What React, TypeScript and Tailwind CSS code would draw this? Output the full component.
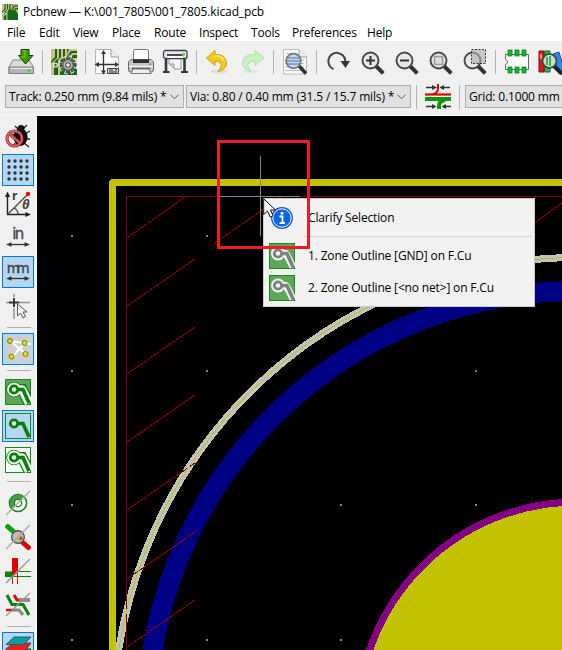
import type { ReactNode } from "react";

const DARK = "#3c3c3c";

function Icon({ children, size = 26 }: { children: ReactNode; size?: number }) {
  return (
    <svg width={size} height={size} viewBox="0 0 26 26" fill="none" className="block shrink-0">
      {children}
    </svg>
  );
}

function Board() {
  return (
    <g>
      <path d="M0 0H26V26H0Z" fill="#0d6b17" />
      <path d="M0 0H4V8L0 12ZM6 0H8V9L3 13V26H0V14L6 9ZM10 0H12V8L9 12V26H7V11L10 8ZM14 0H16V9H14ZM18 0H26V2H20L16 7V5ZM26 4V6H22L17 11V9L21 4ZM26 9V16L21 9Z" fill="#d8b987" />
      <circle cx="4.500" cy="16" r="2.600" fill="#d8ead8" />
      <circle cx="4.500" cy="16" r="1.200" fill="#0d6b17" />
    </g>
  );
}

function BoardSetup() {
  return (
    <Icon>
      <Board />
      <circle cx="17" cy="16" r="7.300" stroke="#e9e9e9" strokeWidth="4.500" strokeDasharray="3.300 2.430" />
      <circle cx="17" cy="16" r="7" stroke="#555" strokeWidth="3" strokeDasharray="2.400 3.100" />
      <circle cx="17" cy="16" r="5.300" fill="#b5b5b5" stroke="#555" strokeWidth="1.200" />
      <circle cx="17" cy="16" r="2.300" fill="#eee" stroke="#555" strokeWidth="1.100" />
    </Icon>
  );
}

function Save() {
  return (
    <Icon>
      <path d="M5 11H21L25.500 18V24.500H1V18Z" fill="#dcdcdc" stroke="#888" />
      <path d="M1 18H25.500V24.500H1Z" fill="#b4b4b4" stroke="#808080" />
      <path d="M2.500 19.500H24" stroke="#eee" />
      <rect x="19.500" y="20.500" width="3" height="2" fill="#2bd52b" />
      <path d="M13 0.500H21V6.500H25L17.500 15L10.500 6.500H13Z" fill="#3f9a08" stroke="#173c05" />
      <path d="M14 1.500H17V8H13" stroke="#74cc2c" />
    </Icon>
  );
}

function PageSettings() {
  return (
    <Icon>
      <path d="M1.500 0.500H17L24.500 8V24.500H1.500Z" fill="#fcfcfc" stroke="#b5b5b5" />
      <path d="M17 0.500V8H24.500" fill="#eee" stroke="#a0a0a0" />
      <path d="M9.500 3V24M3 15.500H23" stroke="#333" strokeWidth="1.300" />
      <path d="M9.500 1L7 5H12ZM9.500 25.500L7 21.500H12ZM0.500 15.500L5 13V18ZM25 15.500L21 13V18Z" fill="#333" />
      <path d="M13.500 19.500H24.500V24.500H13.500Z" fill="#e8d8ca" stroke="#444" />
      <path d="M15 21H19M21 21H23M15 23H23" stroke="#333" />
    </Icon>
  );
}

function Print() {
  return (
    <Icon>
      <path d="M5.500 11V1.500Q5.500 0.500 7 0.500H19Q20.500 0.500 20.500 2V11Z" fill="#fff" stroke="#777" />
      <path d="M3 10.500H23L25.500 13V21Q25.500 23 23.500 23H2.500Q0.500 23 0.500 21V13Z" fill="#c4c4c4" stroke="#666" />
      <path d="M5 10.500H21V14H5Z" fill="#2f2f2f" />
      <path d="M1 17.500H25" stroke="#f1f1f1" strokeWidth="1.500" />
      <path d="M4 19.500H22" stroke="#555" strokeWidth="1.600" />
      <path d="M5 20H21L23 24.500H3Z" fill="#efefef" stroke="#777" />
      <rect x="21" y="14.500" width="2.500" height="1.500" fill="#35c535" />
    </Icon>
  );
}

function Plot() {
  return (
    <Icon>
      <path d="M4 9V22M22.500 9V22" stroke="#303840" strokeWidth="2.600" />
      <path d="M1 23H7.500M19 23H26" stroke="#303840" strokeWidth="2.200" />
      <path d="M7 7H19V20H12L7 15Z" fill="#f3f3f3" stroke="#999" />
      <path d="M7 15H12V20" fill="#d0d0d0" stroke="#999" />
      <rect x="1.500" y="1.500" width="23.500" height="8" rx="2" fill="#e8e8e8" stroke="#3b4248" strokeWidth="1.300" />
      <path d="M5 6H21" stroke="#454b50" strokeWidth="2" />
      <path d="M5 9L7 7H19L21 9" fill="#fff" />
      <rect x="20" y="4" width="3" height="2.500" fill="#6acb3e" />
    </Icon>
  );
}

function Undo() {
  return (
    <Icon>
      <ellipse cx="14" cy="22.500" rx="9" ry="2" fill="#dedede" />
      <path d="M1.500 9L10 1.500V5.500Q21 5 21.500 14Q21.500 21 13 22.500Q18 17 15 13.500Q13.500 12 10 12V16.500Z" fill="#f4cb20" stroke="#d3a000" />
      <path d="M10 7Q17 6 19 12" stroke="#ffea88" strokeWidth="1.300" />
    </Icon>
  );
}

function Redo() {
  return (
    <Icon>
      <ellipse cx="12" cy="22.500" rx="9" ry="2" fill="#e7e7e7" />
      <path d="M25 9L16 1.500V5.500Q4 5 3.500 14Q3.500 20 12 22.500Q7 17 10 13.500Q12 12 16 12V16.500Z" fill="#c9f0c5" stroke="#a5e4a2" />
    </Icon>
  );
}

function Lens({ children, fill = "#e8e8e8" }: { children?: ReactNode; fill?: string }) {
  return (
    <g>
      <path d="M16.500 16.500L24.300 24.300" stroke="#333" strokeWidth="4" />
      <circle cx="11.500" cy="11.500" r="8" fill={fill} stroke="#474747" strokeWidth="1.900" />
      {children}
    </g>
  );
}

function Find() {
  return (
    <Icon>
      <path d="M1.500 0.500H17L24.500 8V25H1.500Z" fill="#fafafa" stroke="#bcbcbc" />
      <path d="M17 0.500V8H24.500" fill="#eee" stroke="#999" />
      <path d="M4 4.500H14M4 7.500H15M3 11H22M3 14.500H22M3 18H22M3 21.500H20" stroke="#bbb" />
      <path d="M17 17L24 24.500" stroke="#333" strokeWidth="3.500" />
      <circle cx="11.500" cy="12" r="7.300" fill="#c8d7ef" stroke="#777" strokeWidth="1.800" />
      <path d="M6 9H17M5 12H18M6 15H17" stroke="#7493c9" strokeWidth="1.300" />
    </Icon>
  );
}

function Refresh() {
  return (
    <Icon>
      <path d="M8.500 20.200A8.500 8.500 0 1 1 20.300 12" stroke="#444" strokeWidth="2" />
      <path d="M15.500 12H25L20.500 19Z" fill="#333" />
    </Icon>
  );
}

function Footprint() {
  return (
    <Icon>
      <path d="M1.500 5.500H24.500V20.500H1.500V16L4 13L1.500 10Z" fill="#fafafa" stroke="#666" />
      <g fill="#11b92c" stroke="#087515" strokeWidth=".7">
        {[4, 11, 18].map((x) => (
          <g key={x}>
            <rect x={x} y="1" width="4" height="6" />
            <rect x={x} y="18" width="4" height="6" />
          </g>
        ))}
      </g>
    </Icon>
  );
}

function Library() {
  return (
    <Icon>
      <path d="M1 2H6V23H1Z" fill="#d71919" stroke="#801111" />
      <path d="M6.500 2H12V23H6.500Z" fill="#2cb34d" stroke="#08712b" />
      <path d="M15 5L21 3L27 23H20Z" fill="#3385e8" stroke="#1456a4" />
      <path d="M16 17L24 25" stroke="#222" strokeWidth="4" />
      <circle cx="11.500" cy="12" r="7" fill="#bce5c6" stroke="#444" strokeWidth="1.700" />
      <path d="M9 8V16M12 7V17" stroke="#45a864" strokeWidth="2" />
      <path d="M3 5V10" stroke="#fff" />
    </Icon>
  );
}

function TrackWidth() {
  return (
    <Icon>
      <path d="M0 10.500H26" stroke="#df0000" strokeWidth="2.200" />
      <path d="M13 0V4Q13 9 8 10" stroke="#df0000" strokeWidth="2" />
      <path d="M0 15H26" stroke="#079907" strokeWidth="4" />
      <path d="M14 25V22Q14 17 20 16" stroke="#079907" strokeWidth="4" />
      <path d="M1 3.500H9M16 3.500H25M1 22.500H10M18 22.500H26" stroke="#333" strokeWidth="1.300" />
      <path d="M12 3.500L7 1V6ZM14.500 3.500L19 1V6ZM11.500 22.500L7 20V25ZM16.500 22.500L21 20V25Z" fill="#333" />
    </Icon>
  );
}

function Bug() {
  return (
    <Icon>
      <path d="M10 3L13 6M22 2L18 6M7 11L10 12M20 11L25 8M20 16H25M19 20L24 24M10 20L8 24" stroke="#222" strokeWidth="1.300" />
      <ellipse cx="15.500" cy="14" rx="7" ry="9" fill="#060606" />
      <circle cx="16" cy="5.500" r="3.500" fill="#111" />
      <circle cx="9.500" cy="15.500" r="7.500" stroke="#a32b2e" strokeWidth="3.200" />
      <path d="M4.500 11L15 20" stroke="#a32b2e" strokeWidth="3.200" />
      <circle cx="9.500" cy="15.500" r="7.500" stroke="#df676a" strokeWidth="1.600" />
      <path d="M4.500 11L15 20" stroke="#df676a" strokeWidth="1.600" />
    </Icon>
  );
}

function GridDots() {
  return (
    <Icon>
      {[4, 10, 16, 22].flatMap((x) =>
        [4, 10, 16, 22].map((y) => <circle key={x + "-" + y} cx={x} cy={y} r="1.700" fill="#333" />),
      )}
    </Icon>
  );
}

function Polar() {
  return (
    <Icon>
      <path d="M2.500 4V23.500H23" stroke="#222" strokeWidth="1.400" />
      <path d="M2.500 0.500L0 6H5ZM26 23.500L20.500 21V26Z" fill="#222" />
      <path d="M3 23L22 4M9 17Q13 19 13 23" stroke="#4e4545" strokeWidth="1.300" />
      <circle cx="23" cy="3" r="2.200" fill="#f00" />
      <text x="7" y="9" fontSize="12" fontWeight="700" fill={DARK} fontFamily="Open Sans, sans-serif">r</text>
      <text x="17" y="18" fontSize="13" fontWeight="700" fontStyle="italic" fill="#544444" fontFamily="Open Sans, sans-serif">θ</text>
    </Icon>
  );
}

function Unit({ label }: { label: string }) {
  return (
    <Icon>
      <text x="13.200" y="14" textAnchor="middle" fontSize={label === "mm" ? 13.5 : 15} fill="#444" stroke="#444" strokeWidth=".35" fontFamily="DejaVu Sans, sans-serif" textLength={label === "mm" ? 23 : 12}>{label}</text>
      <path d="M4 19.500H22" stroke="#333" strokeWidth="1.300" />
      <path d="M1 19.500L6.500 17.300V21.700ZM25 19.500L19.500 17.300V21.700Z" fill="#333" />
    </Icon>
  );
}

function CursorShape() {
  return (
    <Icon>
      <path d="M1 9.500H5M14 9.500H25M9 1V4M9 15V26" stroke="#919191" strokeWidth="1.500" />
      <path d="M4 9.500H14M9 5V14" stroke="#333" strokeWidth="1.900" />
      <path d="M12.500 11V23L15.500 20L18 25L20.500 23.500L18 19H22Z" fill="#fafafa" stroke="#555" />
    </Icon>
  );
}

function Ratsnest() {
  return (
    <Icon>
      <rect width="26" height="26" fill="#cfcfcf" />
      <path d="M5 5L26 8M5 5L21 18M7 21L20 7" stroke="#fff" strokeWidth="2" />
      <g fill="#d4e500" stroke="#77772a">
        <circle cx="5" cy="5" r="2.500" />
        <circle cx="19.500" cy="7" r="2.500" />
        <circle cx="20.500" cy="18" r="2.500" />
        <circle cx="6.500" cy="20.500" r="2.500" />
      </g>
    </Icon>
  );
}

type ZoneKind = "filled" | "plain" | "outline" | "gray";

function Zone({ kind }: { kind: ZoneKind }) {
  const filled = kind === "filled" || kind === "gray";
  const ink = kind === "gray" ? "#808080" : "#078007";
  const path = "M9 10.500H17L24 24";
  return (
    <Icon>
      <rect x=".5" y=".5" width="25" height="25" fill={filled ? "#5ca75c" : kind === "outline" ? "#fbfbfb" : "#b5d7f4"} stroke="#178b17" />
      {kind !== "plain" && (
        <g>
          {kind !== "gray" && <path d={path} stroke="#078007" strokeWidth="11" />}
          {kind !== "gray" && <circle cx="9" cy="10.500" r="7.800" fill="#078007" />}
          <path d={path} stroke="#f5f5f5" strokeWidth={kind === "gray" ? 7 : 8.5} strokeLinejoin="round" />
          <circle cx="9" cy="10.500" r="6.900" fill="#f5f5f5" />
        </g>
      )}
      <path d="M13 10.500H18L24 24" stroke={ink} strokeWidth="3.600" />
      <circle cx="9" cy="10.500" r="3.700" fill="#e9f3e9" stroke={ink} strokeWidth="2.800" />
    </Icon>
  );
}

function PadSketch() {
  return (
    <Icon>
      <circle cx="13" cy="13" r="8.600" fill="#fafafa" stroke="#168416" strokeWidth="1.500" />
      <path d="M7 19A8.500 8.500 0 0 1 19 7Z" fill="#459c45" />
      <circle cx="13" cy="13" r="3.600" fill="#f4f4f4" stroke="#168416" strokeWidth="1.300" />
      <path d="M1 25L25 1" stroke="#aaa" strokeWidth="1.300" />
    </Icon>
  );
}

function ViaSketch() {
  return (
    <Icon>
      <path d="M1 1L10 9" stroke="#00a20a" strokeWidth="5" />
      <path d="M15 16L25 25" stroke="#dc0505" strokeWidth="5" />
      <circle cx="13" cy="13" r="6.300" fill="#bcbcbc" stroke="#555" strokeWidth="1.400" />
      <path d="M11 16L16 11V16Z" fill="#c4bf00" />
      <path d="M14 16L16 12L18 15Z" fill="#df2525" />
      <path d="M1 25L25 1" stroke="#aaa" strokeWidth="1.200" />
    </Icon>
  );
}

function TrackSketch() {
  return (
    <Icon>
      <path d="M0 13.500H8V19H0Z" fill="#078507" />
      <path d="M8 13.500H26M8 18.500H26" stroke="#078507" />
      <path d="M7 0H13V14L7 20Z" fill="#df0000" />
      <path d="M7.500 15V26M12.500 14V26" stroke="#df0000" />
      <path d="M1 25L25 1" stroke="#999" strokeWidth="1.500" />
    </Icon>
  );
}

function Contrast() {
  return (
    <Icon>
      <path d="M9 3L12 8H25" stroke="#d40b18" strokeWidth="3" />
      <path d="M14 8H25" stroke="#888" strokeWidth="3" />
      <path d="M2 3L7 12.500H18L24 23" stroke="#078507" strokeWidth="3" />
      <path d="M1 18H10" stroke="#d40b18" strokeWidth="2.500" />
      <path d="M8 18H14L18 23" stroke="#888" strokeWidth="3" />
      <path d="M1 24L25 1" stroke="#999" strokeWidth="1.200" />
    </Icon>
  );
}

function Layers() {
  return (
    <Icon>
      <path d="M1 19L8 14H26L20 22H1Z" fill="#189a17" stroke="#333" />
      <path d="M1 14L8 8H26L20 16H1Z" fill="#ef1e1e" stroke="#444" />
      <path d="M1 9.500L9 2H26L19 9.500Z" fill="#079f9d" stroke="#265e60" />
    </Icon>
  );
}

const VSep = () => <div className="flex w-[9px] shrink-0 justify-center"><i className="h-[24px] w-px bg-[#b4b4b4]" /></div>;
const HSep = () => <div className="flex h-[9px] shrink-0 items-center justify-center"><i className="h-px w-[24px] bg-[#b0b0b0]" /></div>;
const Tool = ({ children }: { children: ReactNode }) => <div className="flex h-[34px] w-[34px] shrink-0 items-center justify-center">{children}</div>;
const Side = ({ children, on = false }: { children: ReactNode; on?: boolean }) => (
  <div className="h-[34px] w-[34px] shrink-0 p-px">
    <div className={on ? "flex h-8 w-8 items-center justify-center border border-[#0078d7] bg-[#b5d7f4]" : "flex h-8 w-8 items-center justify-center"}>{children}</div>
  </div>
);

function Combo({ label, box, text }: { label: string; box: string; text: string }) {
  return (
    <div className={"flex h-[23px] shrink-0 items-center justify-between border border-[#adadad] bg-[#e1e1e1] pl-[3px] pr-1 " + box}>
      <span className={text}>{label}</span>
      <svg width="9" height="6" viewBox="0 0 9 6" fill="none"><path d="M.5 .7L4.500 4.700L8.500 .7" stroke="#555" /></svg>
    </div>
  );
}

const menus = [
  { label: "File", cls: "w-[32px]" },
  { label: "Edit", cls: "w-[34px]" },
  { label: "View", cls: "w-[39px]" },
  { label: "Place", cls: "w-[42px]" },
  { label: "Route", cls: "w-[45px]" },
  { label: "Inspect", cls: "w-[52px]" },
  { label: "Tools", cls: "w-[41px]" },
  { label: "Preferences", cls: "w-[75px]" },
  { label: "Help", cls: "w-[30px]" },
];

function BoardCanvas() {
  return (
    <svg width="525" height="534" viewBox="37 116 525 534" fill="none" shapeRendering="crispEdges" className="block">
      <rect x="37" y="116" width="525" height="534" fill="#000" />
      {[71, 206, 340, 475].flatMap((x) =>
        [235, 370, 504, 639].map((y) => <rect key={x + "-" + y} x={x} y={y} width="2" height="2" fill="#848484" />),
      )}
      <circle cx="576.600" cy="720.800" r="429.800" stroke="#000084" strokeWidth="20" />
      <circle cx="576.600" cy="720.800" r="463.300" stroke="#c2c2c2" strokeWidth="7" />
      <path d="M112.500 660V182.500H570" stroke="#c2c200" strokeWidth="7" strokeLinejoin="round" />
      <path d="M126.500 650V196.500H562" stroke="#840000" />
      <path d="M127 238L185 197M127 306L195 259M127 374L195 327M127 442L195 395M127 510L195 463M127 579L195 532M127 647L195 600M213 244.500L281 197M535 222.500L562 203" stroke="#840000" />
      <circle cx="576.600" cy="720.800" r="463.300" stroke="#c2c200" />
      <circle cx="576.600" cy="720.800" r="218.700" fill="#c2c200" stroke="#840084" strokeWidth="7" />
      <path d="M260.500 156V236M220 196.500H300" stroke="#848484" />
    </svg>
  );
}

function InfoIcon() {
  return (
    <Icon>
      <circle cx="13" cy="13" r="10.200" fill="#0866e5" stroke="#1458b5" strokeWidth="1.500" />
      <circle cx="13" cy="13" r="9.200" stroke="#fff" strokeWidth="1" />
      <circle cx="13" cy="8.300" r="1.500" fill="#fff" />
      <path d="M10.500 11.500H13.500V18M10.500 18.200H16" stroke="#fff" strokeWidth="1.800" />
    </Icon>
  );
}

function ContextMenu() {
  return (
    <div className="absolute left-[226px] top-[82px] h-[109px] w-[272px] border border-[#ccc] bg-[#f2f2f2] pt-px text-[12px]">
      <div className="flex h-[35px] items-center pl-[5px]"><InfoIcon /><span className="ml-[13px] tracking-[-0.160px]">Clarify Selection</span></div>
      <div className="ml-[40px] mr-[2px] mt-[1px] h-px bg-[#d7d7d7]" />
      <div className="mt-[3px] flex h-8 items-center pl-[5px]"><Zone kind="gray" /><span className="ml-[13px] tracking-[-0.160px]">1. Zone Outline [GND] on F.Cu</span></div>
      <div className="flex h-8 items-center pl-[5px]"><Zone kind="gray" /><span className="ml-[13px] tracking-[-0.160px]">2. Zone Outline [&lt;no net&gt;] on F.Cu</span></div>
    </div>
  );
}

export default function App() {
  return (
    <div className="flex h-[650px] w-[562px] flex-col overflow-hidden whitespace-nowrap bg-[#f0f0f0] text-[12px] leading-4 text-black [font-family:'Open_Sans',sans-serif]">
      <header className="flex h-6 shrink-0 items-center bg-white pl-[2px]">
        <svg width="16" height="16" viewBox="0 0 26 26" className="shrink-0"><Board /></svg>
        <span className="ml-[5px] tracking-[-0.120px]">Pcbnew — K:\001_7805\001_7805.kicad_pcb</span>
      </header>
      <nav className="flex h-[17px] shrink-0 items-center bg-white pl-[7px] tracking-[-0.200px]">
        {menus.map((m) => <span key={m.label} className={"shrink-0 " + m.cls}>{m.label}</span>)}
      </nav>
      <div className="flex h-[42px] shrink-0 items-center pl-1">
        <Tool><Save /></Tool><VSep />
        <Tool><BoardSetup /></Tool><VSep />
        <Tool><PageSettings /></Tool><Tool><Print /></Tool><Tool><Plot /></Tool><VSep />
        <Tool><Undo /></Tool><Tool><Redo /></Tool><VSep />
        <Tool><Find /></Tool><VSep />
        <Tool><Refresh /></Tool>
        <Tool><Icon><Lens><path d="M7 11.500H16M11.500 7V16" stroke="#333" strokeWidth="2" /></Lens></Icon></Tool>
        <Tool><Icon><Lens><path d="M7 11.500H16" stroke="#333" strokeWidth="2" /></Lens></Icon></Tool>
        <Tool><Icon><Lens><rect x="7.500" y="7.500" width="8" height="8" fill="#ddd" stroke="#999" strokeWidth="1.500" /></Lens></Icon></Tool>
        <Tool><Icon><Lens><path d="M10.500 .5H24.500V14.500H10.500Z" fill="#aaa" fillOpacity=".6" stroke="#333" strokeDasharray="2 1.500" /></Lens></Icon></Tool>
        <VSep /><Tool><Footprint /></Tool><Tool><Library /></Tool>
      </div>
      <div className="flex h-[33px] shrink-0 items-start border-b border-[#fafafa] pl-[5px]">
        <div className="mt-[2px] flex">
          <Combo label="Track: 0.250 mm (9.84 mils) *" box="w-[179px]" text="tracking-[-0.160px]" />
          <div className="w-[2px]" />
          <Combo label="Via: 0.80 / 0.40 mm (31.5 / 15.7 mils) *" box="w-[225px]" text="tracking-[-0.160px]" />
        </div>
        <div className="mt-px flex h-[26px] items-center">
          <div className="w-px" /><VSep />
          <div className="w-[4px]" /><TrackWidth /><div className="w-[4px]" />
          <VSep /><div className="w-px" />
        </div>
        <div className="mt-[2px]"><Combo label="Grid: 0.1000 mm (3.94 mils)" box="w-[200px]" text="tracking-[-0.160px]" /></div>
      </div>
      <div className="flex h-[534px] shrink-0">
        <aside className="flex w-[37px] shrink-0 flex-col border-r border-[#fafafa] pl-px pt-[3px]">
          <Side><Bug /></Side>
          <Side on><GridDots /></Side>
          <Side><Polar /></Side>
          <Side><Unit label="in" /></Side>
          <Side on><Unit label="mm" /></Side>
          <Side><CursorShape /></Side>
          <HSep /><Side on><Ratsnest /></Side><HSep />
          <Side><Zone kind="filled" /></Side>
          <Side on><Zone kind="plain" /></Side>
          <Side><Zone kind="outline" /></Side>
          <HSep />
          <Side><PadSketch /></Side><Side><ViaSketch /></Side><Side><TrackSketch /></Side><Side><Contrast /></Side>
          <HSep /><Side on><Layers /></Side>
        </aside>
        <main className="relative h-[534px] w-[525px] overflow-hidden">
          <BoardCanvas />
          <ContextMenu />
          <div className="absolute left-[180px] top-[24px] h-[109px] w-[93px] border-[3px] border-[#ed1c24]" />
          <svg width="14" height="21" viewBox="0 0 14 21" className="absolute left-[226px] top-[82px]">
            <path d="M.7 .8V16.500L4.500 13L7.200 19L10 17.800L7.500 12H12.500Z" fill="#fff" stroke="#111" />
          </svg>
        </main>
      </div>
    </div>
  );
}
